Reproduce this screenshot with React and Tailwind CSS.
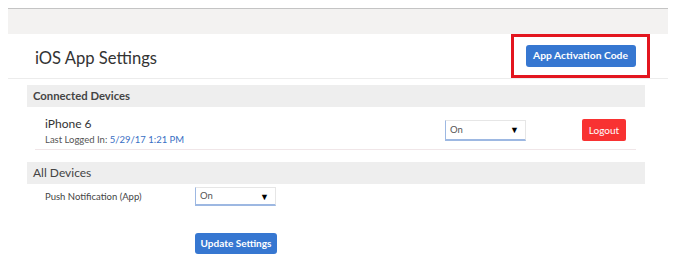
import React from 'react';

const font = { fontFamily: 'Lato, "Open Sans", "Liberation Sans", sans-serif' };

const FakeSelect = ({ className = '' }) => (
  <div
    className={`flex items-center justify-between bg-white border border-[#e6e6e6] border-l-[#9db8e2] border-b-[#9db8e2] border-b-2 pl-[4px] pr-[6px] ${className}`}
  >
    <span className="text-[9.5px] text-[#555] leading-none">On</span>
    <span className="text-[9px] text-black leading-none">▼</span>
  </div>
);

const SectionBar = ({ children, className = '' }) => (
  <div className={`h-[22px] bg-[#eeeeee] flex items-center pl-[6px] text-[#444] ${className}`}>
    {children}
  </div>
);

const App = () => {
  return (
    <div className="w-[678px] h-[266px] bg-white overflow-hidden pt-[8px]" style={font}>
      <div className="ml-[8px] w-[660px]">
        <div className="h-[26px] bg-[#f3f2f1] border-t border-[#c4c4c4]" />

        <div className="h-[45px] flex items-center justify-between border-b border-[#ececec]">
          <h1 className="ml-[27px] text-[16.6px] text-[#333] leading-none pt-[4px]">iOS App Settings</h1>
          <div className="mr-[18px] w-[139px] h-[44px] border-[3px] border-[#e3161f] flex items-center justify-center">
            <button className="w-[110px] h-[22px] rounded-[3px] bg-[#3677d1] text-white text-[10.3px] font-bold">
              App Activation Code
            </button>
          </div>
        </div>

        <div className="ml-[19px] w-[618px] mt-[6px]">
          <SectionBar className="text-[11.3px] font-bold">Connected Devices</SectionBar>

          <div className="ml-[8px] mr-[9px] h-[43px] pt-[4px] border-b border-[#f0e6e8] flex items-center pl-[10px]">
            <div className="w-[400px] flex flex-col gap-[5px] pt-[2px]">
              <span className="text-[12px] text-[#333] leading-none">iPhone 6</span>
              <span className="text-[9.5px] text-[#555] leading-none">
                Last Logged In: <span className="text-[#3a6fc4]">5/29/17 1:21 PM</span>
              </span>
            </div>
            <FakeSelect className="w-[81px] h-[21px]" />
            <button className="ml-[56px] w-[44px] h-[22px] rounded-[2px] bg-[#f83232] text-white text-[10px]">
              Logout
            </button>
          </div>

          <SectionBar className="mt-[12px] text-[12px]">All Devices</SectionBar>

          <div className="flex pl-[18px] pt-[3px]">
            <span className="w-[150px] text-[9.5px] text-[#444] pt-[3px]">Push Notification (App)</span>
            <FakeSelect className="w-[81px] h-[19px]" />
          </div>

          <div className="pl-[168px] mt-[23px]">
            <button className="w-[82px] h-[21px] rounded-[3px] bg-[#3677d1] text-white text-[10px] font-bold">
              Update Settings
            </button>
          </div>
        </div>
      </div>
    </div>
  );
};

export default App;
